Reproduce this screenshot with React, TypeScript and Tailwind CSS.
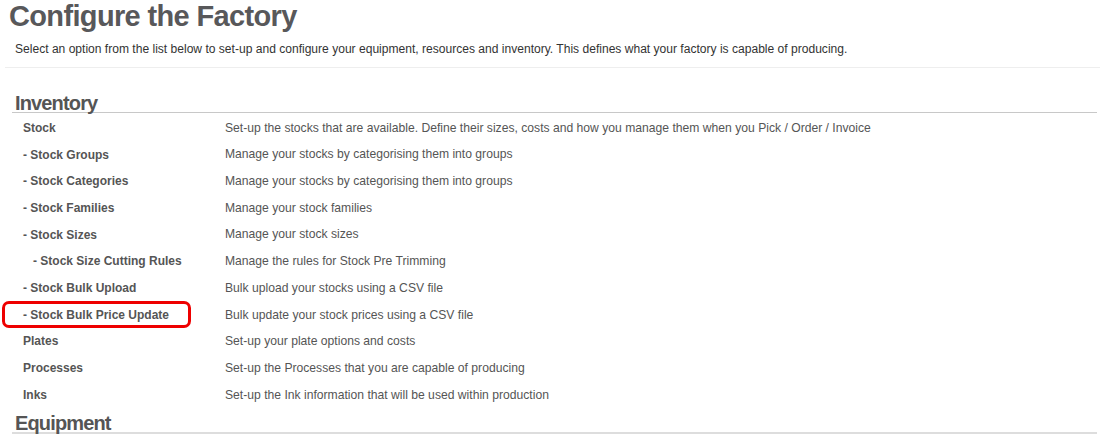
import React from 'react'

interface Item {
  label: string
  desc: string
  indent?: number
  highlight?: boolean
}

const inventory: Item[] = [
  { label: 'Stock', desc: 'Set-up the stocks that are available. Define their sizes, costs and how you manage them when you Pick / Order / Invoice' },
  { label: '- Stock Groups', desc: 'Manage your stocks by categorising them into groups' },
  { label: '- Stock Categories', desc: 'Manage your stocks by categorising them into groups' },
  { label: '- Stock Families', desc: 'Manage your stock families' },
  { label: '- Stock Sizes', desc: 'Manage your stock sizes' },
  { label: '- Stock Size Cutting Rules', desc: 'Manage the rules for Stock Pre Trimming', indent: 1 },
  { label: '- Stock Bulk Upload', desc: 'Bulk upload your stocks using a CSV file' },
  { label: '- Stock Bulk Price Update', desc: 'Bulk update your stock prices using a CSV file', highlight: true },
  { label: 'Plates', desc: 'Set-up your plate options and costs' },
  { label: 'Processes', desc: 'Set-up the Processes that you are capable of producing' },
  { label: 'Inks', desc: 'Set-up the Ink information that will be used within production' },
]

function Row({ item }: { item: Item }) {
  return (
    <div className="relative flex items-center h-[26.7px] text-[#555]">
      {item.highlight && (
        <div className="absolute left-[-21px] top-[0px] w-[189px] h-[27px] border-[3.5px] border-[#ee0000] rounded-[7px]" />
      )}
      <div className={`w-[202px] shrink-0 text-[12px] font-bold ${item.indent ? 'pl-[10px]' : ''}`}>{item.label}</div>
      <div className="text-[12.15px]">{item.desc}</div>
    </div>
  )
}

export default function App() {
  return (
    <div className="w-[1102px] h-[443px] overflow-hidden bg-white font-['Liberation_Sans',Arial,sans-serif] text-[#555]">
      <h1 className="pl-[9px] pt-[1px] text-[29px] leading-[30px] tracking-[-0.65px] font-bold text-[#58585a]">Configure the Factory</h1>
      <p className="pl-[15px] mt-[11px] text-[12.07px] leading-[15px] text-[#333]">
        Select an option from the list below to set-up and configure your equipment, resources and inventory. This defines what your factory is capable of producing.
      </p>
      <div className="ml-[5px] mr-[2px] mt-[10px] border-t border-[#eee]" />

      <div className="ml-[12px] mr-[5px] mt-[27px]">
        <h2 className="pl-[3px] text-[20px] leading-[17px] tracking-[-0.85px] font-bold text-[#555] border-b border-[#c8c8c8]">Inventory</h2>
        <div className="pl-[11px] pt-[1.5px]">
          {inventory.map((item) => (
            <Row key={item.label} item={item} />
          ))}
        </div>
        <h2 className="pl-[3px] mt-[7px] text-[20px] leading-[17px] tracking-[-0.85px] font-bold text-[#555] border-b-2 border-[#ddd]">Equipment</h2>
      </div>
    </div>
  )
}
